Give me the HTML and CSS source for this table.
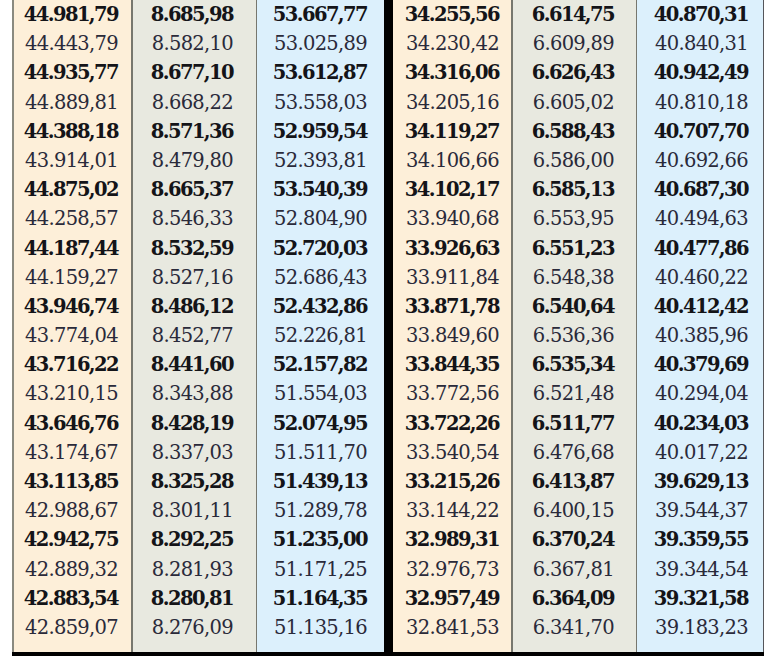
FILE: index.html
```html
<!DOCTYPE html>
<html lang="es">
<head>
<meta charset="utf-8">
<link rel="stylesheet" href="styles.css">
</head>
<body>
<div class="table">
  <div class="col c1 orange">
    <div class="b">44.981,79</div><div>44.443,79</div>
    <div class="b">44.935,77</div><div>44.889,81</div>
    <div class="b">44.388,18</div><div>43.914,01</div>
    <div class="b">44.875,02</div><div>44.258,57</div>
    <div class="b">44.187,44</div><div>44.159,27</div>
    <div class="b">43.946,74</div><div>43.774,04</div>
    <div class="b">43.716,22</div><div>43.210,15</div>
    <div class="b">43.646,76</div><div>43.174,67</div>
    <div class="b">43.113,85</div><div>42.988,67</div>
    <div class="b">42.942,75</div><div>42.889,32</div>
    <div class="b">42.883,54</div><div>42.859,07</div>
  </div>
  <div class="col c2 gray">
    <div class="b">8.685,98</div><div>8.582,10</div>
    <div class="b">8.677,10</div><div>8.668,22</div>
    <div class="b">8.571,36</div><div>8.479,80</div>
    <div class="b">8.665,37</div><div>8.546,33</div>
    <div class="b">8.532,59</div><div>8.527,16</div>
    <div class="b">8.486,12</div><div>8.452,77</div>
    <div class="b">8.441,60</div><div>8.343,88</div>
    <div class="b">8.428,19</div><div>8.337,03</div>
    <div class="b">8.325,28</div><div>8.301,11</div>
    <div class="b">8.292,25</div><div>8.281,93</div>
    <div class="b">8.280,81</div><div>8.276,09</div>
  </div>
  <div class="col c3 blue">
    <div class="b">53.667,77</div><div>53.025,89</div>
    <div class="b">53.612,87</div><div>53.558,03</div>
    <div class="b">52.959,54</div><div>52.393,81</div>
    <div class="b">53.540,39</div><div>52.804,90</div>
    <div class="b">52.720,03</div><div>52.686,43</div>
    <div class="b">52.432,86</div><div>52.226,81</div>
    <div class="b">52.157,82</div><div>51.554,03</div>
    <div class="b">52.074,95</div><div>51.511,70</div>
    <div class="b">51.439,13</div><div>51.289,78</div>
    <div class="b">51.235,00</div><div>51.171,25</div>
    <div class="b">51.164,35</div><div>51.135,16</div>
  </div>
  <div class="sep"></div>
  <div class="col c4 orange">
    <div class="b">34.255,56</div><div>34.230,42</div>
    <div class="b">34.316,06</div><div>34.205,16</div>
    <div class="b">34.119,27</div><div>34.106,66</div>
    <div class="b">34.102,17</div><div>33.940,68</div>
    <div class="b">33.926,63</div><div>33.911,84</div>
    <div class="b">33.871,78</div><div>33.849,60</div>
    <div class="b">33.844,35</div><div>33.772,56</div>
    <div class="b">33.722,26</div><div>33.540,54</div>
    <div class="b">33.215,26</div><div>33.144,22</div>
    <div class="b">32.989,31</div><div>32.976,73</div>
    <div class="b">32.957,49</div><div>32.841,53</div>
  </div>
  <div class="col c5 gray">
    <div class="b">6.614,75</div><div>6.609,89</div>
    <div class="b">6.626,43</div><div>6.605,02</div>
    <div class="b">6.588,43</div><div>6.586,00</div>
    <div class="b">6.585,13</div><div>6.553,95</div>
    <div class="b">6.551,23</div><div>6.548,38</div>
    <div class="b">6.540,64</div><div>6.536,36</div>
    <div class="b">6.535,34</div><div>6.521,48</div>
    <div class="b">6.511,77</div><div>6.476,68</div>
    <div class="b">6.413,87</div><div>6.400,15</div>
    <div class="b">6.370,24</div><div>6.367,81</div>
    <div class="b">6.364,09</div><div>6.341,70</div>
  </div>
  <div class="col c6 blue">
    <div class="b">40.870,31</div><div>40.840,31</div>
    <div class="b">40.942,49</div><div>40.810,18</div>
    <div class="b">40.707,70</div><div>40.692,66</div>
    <div class="b">40.687,30</div><div>40.494,63</div>
    <div class="b">40.477,86</div><div>40.460,22</div>
    <div class="b">40.412,42</div><div>40.385,96</div>
    <div class="b">40.379,69</div><div>40.294,04</div>
    <div class="b">40.234,03</div><div>40.017,22</div>
    <div class="b">39.629,13</div><div>39.544,37</div>
    <div class="b">39.359,55</div><div>39.344,54</div>
    <div class="b">39.321,58</div><div>39.183,23</div>
  </div>
</div>
</body>
</html>
```

FILE: styles.css
```css
html, body {
  margin: 0;
  padding: 0;
  background: #ffffff;
}

.table {
  display: flex;
  margin-left: 12px;
  width: 752px;
  border-bottom: 4px solid #000000;
  font-family: "DejaVu Serif", "Liberation Serif", serif;
  font-size: 19.5px;
  color: #1c1c28;
}

.col {
  box-sizing: border-box;
  display: flex;
  flex-direction: column;
  text-align: right;
  padding-bottom: 9.6px;
}

.col > div {
  height: 29.2px;
  line-height: 29.2px;
  white-space: nowrap;
  letter-spacing: -0.7px;
  color: #2a2a3a;
}

.col > .b {
  font-weight: bold;
  letter-spacing: -1.6px;
  color: #141418;
}

.orange { background: #fdefd9; }
.gray { background: #e8e9e0; }
.blue { background: #dcf0fc; }

.c1 {
  width: 121px;
  border-left: 2px solid #8a8a80;
  border-right: 2px solid #77776e;
  padding-right: 13px;
}
.c2 {
  width: 124px;
  border-right: 1px solid #77776e;
  padding-right: 23px;
}
.c3 {
  width: 127px;
  padding-right: 17px;
}
.sep {
  width: 9px;
  background: #000000;
}
.c4 {
  width: 120px;
  border-right: 2px solid #77776e;
  padding-right: 12px;
}
.c5 {
  width: 124px;
  border-right: 1px solid #77776e;
  padding-right: 22px;
}
.c6 {
  width: 127px;
  border-right: 1px solid #55555a;
  padding-right: 15px;
}
```
